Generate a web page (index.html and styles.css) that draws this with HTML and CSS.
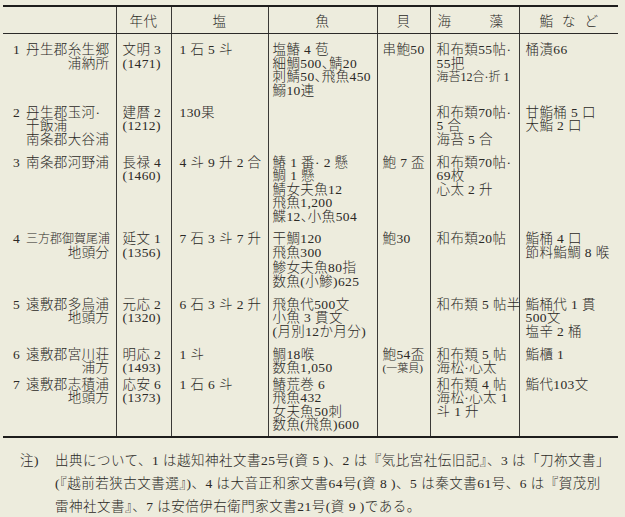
FILE: index.html
```html
<!DOCTYPE html>
<html lang="ja">
<head>
<meta charset="utf-8">
<link rel="stylesheet" href="styles.css">
</head>
<body>
<table class="tbl">
  <colgroup>
    <col class="w1"><col class="w2"><col class="w3"><col class="w4"><col class="w5"><col class="w6"><col class="w7">
  </colgroup>
  <thead>
    <tr>
      <th></th>
      <th>年代</th>
      <th>塩</th>
      <th>魚</th>
      <th>貝</th>
      <th><span class="kaiso"><span>海</span><span>藻</span></span></th>
      <th><span class="sushi">鮨など</span></th>
    </tr>
  </thead>
  <tbody>
    <tr class="r1">
      <td><div class="place"><span class="no">1</span>丹生郡糸生郷</div><div class="sub">浦納所</div></td>
      <td>文明 3<br>(1471)</td>
      <td>1 石 5 斗</td>
      <td>塩鰆 4 苞<br>細鯛500、鯖20<br>刺鯖50、飛魚450<br>鰯10連</td>
      <td>串鮑50</td>
      <td>和布類55帖·<br>55把<br><span class="narrow">海苔12合·折 1</span></td>
      <td>桶漬66</td>
    </tr>
    <tr class="r2">
      <td><div class="place"><span class="no">2</span>丹生郡玉河·</div><div class="cont">干飯浦</div><div class="cont">南条郡大谷浦</div></td>
      <td>建暦 2<br>(1212)</td>
      <td>130果</td>
      <td></td>
      <td></td>
      <td>和布類70帖·<br>5 合<br>海苔 5 合</td>
      <td>甘鮨桶 5 口<br>大鮨 2 口</td>
    </tr>
    <tr class="r3">
      <td><div class="place"><span class="no">3</span>南条郡河野浦</div></td>
      <td>長禄 4<br>(1460)</td>
      <td>4 斗 9 升 2 合</td>
      <td>鰆 1 番· 2 懸<br>鯛 1 懸<br>鯖女夫魚12<br>飛魚1,200<br>鰈12、小魚504</td>
      <td>鮑 7 盃</td>
      <td>和布類70帖·<br>69枚<br>心太 2 升</td>
      <td></td>
    </tr>
    <tr class="r4">
      <td><div class="place"><span class="no">4</span><span class="cond">三方郡御賀尾浦</span></div><div class="sub">地頭分</div></td>
      <td>延文 1<br>(1356)</td>
      <td>7 石 3 斗 7 升</td>
      <td>干鯛120<br>飛魚300<br>鯵女夫魚80指<br>数魚(小鯵)625</td>
      <td>鮑30</td>
      <td>和布類20帖</td>
      <td>鮨桶 4 口<br>節料鮨鯛 8 喉</td>
    </tr>
    <tr class="r5">
      <td><div class="place"><span class="no">5</span>遠敷郡多烏浦</div><div class="sub">地頭方</div></td>
      <td>元応 2<br>(1320)</td>
      <td>6 石 3 斗 2 升</td>
      <td>飛魚代500文<br>小魚 3 貫文<br>(月別12か月分)</td>
      <td></td>
      <td>和布類 5 帖半</td>
      <td>鮨桶代 1 貫<br>500文<br>塩辛 2 桶</td>
    </tr>
    <tr class="r6">
      <td><div class="place"><span class="no">6</span>遠敷郡宮川荘</div><div class="sub">浦方</div></td>
      <td>明応 2<br>(1493)</td>
      <td>1 斗</td>
      <td>鯛18喉<br>数魚1,050</td>
      <td>鮑54盃<br><span class="small">(一葉貝)</span></td>
      <td>和布類 5 帖<br>海松·心太</td>
      <td>鮨櫃 1</td>
    </tr>
    <tr class="r7">
      <td><div class="place"><span class="no">7</span>遠敷郡志積浦</div><div class="sub">地頭方</div></td>
      <td>応安 6<br>(1373)</td>
      <td>1 石 6 斗</td>
      <td>鰆荒巻 6<br>飛魚432<br>女夫魚50刺<br>数魚(飛魚)600</td>
      <td></td>
      <td>和布類 4 帖<br>海松·心太 1<br>斗 1 升</td>
      <td>鮨代103文</td>
    </tr>
  </tbody>
</table>
<div class="note">
  <div class="note-label">注)</div>
  <div class="note-text">
    <div>出典について、1 は越知神社文書25号(資 5 )、2 は『気比宮社伝旧記』、3 は「刀祢文書」</div>
    <div>(『越前若狭古文書選』)、4 は大音正和家文書64号(資 8 )、5 は秦文書61号、6 は『賀茂別</div>
    <div>雷神社文書』、7 は安倍伊右衛門家文書21号(資 9 )である。</div>
  </div>
</div>
</body>
</html>
```

FILE: styles.css
```css
html {
  background: #edecdd;
}
body {
  margin: 0;
  color: #2b2926;
  font-family: "Liberation Serif", "Noto Sans CJK JP", serif;
  font-size: 13.5px;
  font-weight: 300;
  letter-spacing: 0.4px;
}
.tbl {
  margin: 5px 0 0 3px;
  width: 615px;
  table-layout: fixed;
  border-collapse: collapse;
  border-top: 2px solid #1e1d1c;
  border-bottom: 2px solid #1e1d1c;
}
.w1 { width: 113px; }
.w2 { width: 55px; }
.w3 { width: 97px; }
.w4 { width: 109px; }
.w5 { width: 53px; }
.w6 { width: 89px; }
.w7 { width: 99px; }

.tbl th {
  height: 26px;
  padding: 0;
  font-weight: 300;
  text-align: center;
  vertical-align: middle;
  border-bottom: 1px solid #2b2a28;
}
.tbl th + th,
.tbl td + td {
  border-left: 1px solid #3a3936;
}
.kaiso {
  display: flex;
  justify-content: space-between;
  padding: 0 15px 0 7px;
}
.sushi {
  letter-spacing: 9px;
  margin-right: -9px;
}
.tbl td {
  padding: 0;
  vertical-align: top;
  white-space: nowrap;
  line-height: 13.5px;
  font-feature-settings: "halt";
}
.tbl td:nth-child(1) { padding-left: 10px; padding-right: 6px; }
.tbl td:nth-child(2) { padding-left: 6px; }
.tbl td:nth-child(3) { padding-left: 8px; }
.tbl td:nth-child(4) { padding-left: 4px; }
.tbl td:nth-child(5) { padding-left: 5px; }
.tbl td:nth-child(6) { padding-left: 6px; }
.tbl td:nth-child(7) { padding-left: 6px; }

.tbl tr.r1 td { padding-top: 9px; }
.r1 { height: 72px; }
.r2 { height: 50px; }
.r3 { height: 76px; }
.r4 { height: 66px; }
.r5 { height: 50px; }
.r6 { height: 30px; }
.r7 { height: 59px; }
.tbl tr.r4 td { line-height: 14.5px; }

.no {
  display: inline-block;
  width: 13px;
}
.cond {
  font-size: 12px;
  letter-spacing: 0;
}
.sub {
  text-align: right;
}
.cont {
  padding-left: 13px;
}
.narrow {
  font-size: 12px;
  letter-spacing: 0;
}
.small {
  font-size: 11px;
  letter-spacing: 0;
}

.note {
  display: flex;
  margin-top: 11px;
  padding-left: 20px;
  line-height: 23px;
  white-space: nowrap;
  letter-spacing: 0.5px;
}
.note-label {
  width: 35px;
}
```
